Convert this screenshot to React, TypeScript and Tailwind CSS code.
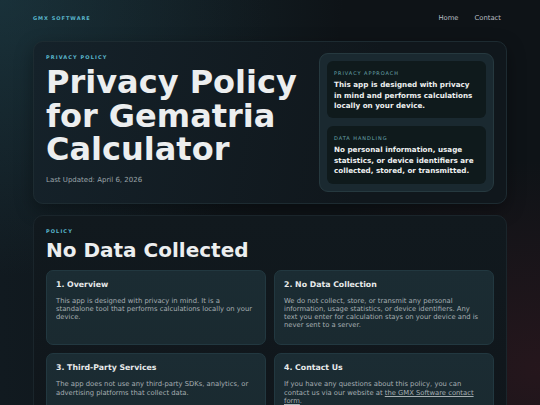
import React from "react";

const policyItems = [
  {
    title: "1. Overview",
    body: "This app is designed with privacy in mind. It is a standalone tool that performs calculations locally on your device.",
  },
  {
    title: "2. No Data Collection",
    body: "We do not collect, store, or transmit any personal information, usage statistics, or device identifiers. Any text you enter for calculation stays on your device and is never sent to a server.",
  },
  {
    title: "3. Third-Party Services",
    body: "The app does not use any third-party SDKs, analytics, or advertising platforms that collect data.",
  },
  {
    title: "4. Contact Us",
    body: "",
  },
];

const highlights = [
  {
    label: "PRIVACY APPROACH",
    text: "This app is designed with privacy in mind and performs calculations locally on your device.",
  },
  {
    label: "DATA HANDLING",
    text: "No personal information, usage statistics, or device identifiers are collected, stored, or transmitted.",
  },
];

const App: React.FC = () => {
  return (
    <div className="min-h-screen overflow-hidden bg-[#0e1418] bg-[radial-gradient(ellipse_at_0%_0%,rgba(38,84,96,0.4),transparent_45%),radial-gradient(ellipse_at_100%_85%,rgba(80,28,38,0.35),transparent_40%),linear-gradient(90deg,#111a20,#0e1317_50%)] px-[33px] font-['DejaVu_Sans',sans-serif]">
      <header className="flex h-[36px] items-center justify-between">
        <span className="text-[5px] font-bold leading-[7px] tracking-[0.2em] text-[#5ab6cc]">
          GMX SOFTWARE
        </span>
        <nav className="flex gap-[16px] pr-[6px] text-[6.8px] text-[#b8bec2]">
          <a>Home</a>
          <a>Contact</a>
        </nav>
      </header>

      <section className="mt-[5px] flex gap-[13px] rounded-[10px] border border-[#1d2b31] bg-[linear-gradient(100deg,#15222a,#10171c_70%)] px-[12px] py-[11px] shadow-[0_6px_18px_rgba(0,0,0,0.35)]">
        <div className="flex-1 pt-[1px]">
          <div className="text-[5px] font-bold leading-[7px] tracking-[0.22em] text-[#5ab6cc]">
            PRIVACY POLICY
          </div>
          <h1 className="mt-[5px] text-[32px] font-bold leading-[33.5px] text-[#eceeef]">
            Privacy Policy for Gematria Calculator
          </h1>
          <p className="mt-[8px] text-[7px] leading-[10px] text-[#9ba5a9]">
            Last Updated: April 6, 2026
          </p>
        </div>

        <div className="flex w-[175px] flex-col gap-[8px] rounded-[9px] border border-[#26393f] bg-[#1a2930] p-[7px]">
          {highlights.map((h) => (
            <div key={h.label} className="rounded-[6px] bg-[#0f1a1c] px-[7px] pb-[6.5px] pt-[9px]">
              <div className="text-[5px] leading-[7px] tracking-[0.19em] text-[#6aa7ae]">
                {h.label}
              </div>
              <p className="mt-[3px] text-[7.2px] font-bold leading-[10.6px] text-[#eef0f0]">
                {h.text}
              </p>
            </div>
          ))}
        </div>
      </section>

      <section className="mt-[11px] rounded-[10px] border border-[#1a252b] bg-[linear-gradient(180deg,#11191e,#10161b)] px-[12px] pb-[12px] pt-[12px]">
        <div className="text-[5px] font-bold leading-[7px] tracking-[0.22em] text-[#5ab6cc]">
          POLICY
        </div>
        <h2 className="mt-[4px] text-[20px] font-bold leading-[22px] text-[#eceeef]">
          No Data Collected
        </h2>

        <div className="mt-[9px] grid grid-cols-2 gap-[8px]">
          {policyItems.map((item) => (
            <div
              key={item.title}
              className="rounded-[7px] border border-[#223840] bg-[linear-gradient(180deg,#1b2c33,#1a2a30)] pb-[15px] pl-[9px] pr-[11px] pt-[8px]"
            >
              <h3 className="text-[7.8px] font-bold leading-[11px] text-[#e8eaeb]">{item.title}</h3>
              <p className="mt-[7px] text-[6.8px] leading-[8.2px] text-[#a6aeb2]">
                {item.body || (
                  <>
                    If you have any questions about this policy, you can contact us via our website at{" "}
                    <a className="underline">the GMX Software contact form</a>.
                  </>
                )}
              </p>
            </div>
          ))}
        </div>
      </section>
    </div>
  );
};

export default App;
